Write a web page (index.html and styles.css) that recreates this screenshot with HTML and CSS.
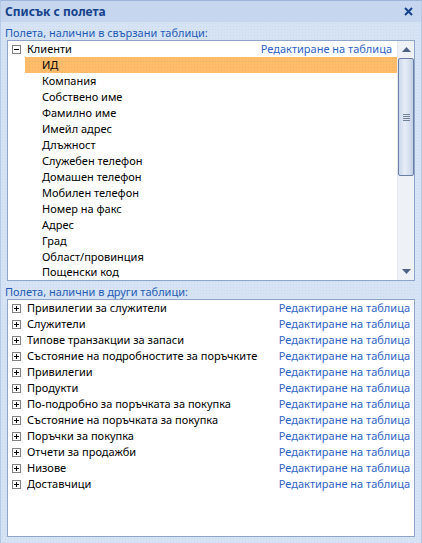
FILE: index.html
```html
<!DOCTYPE html>
<html lang="bg">
<head>
<meta charset="utf-8">
<title>Списък с полета</title>
<link rel="stylesheet" href="styles.css">
</head>
<body>
<div class="window">
  <div class="titlebar">
    <span class="title">Списък с полета</span>
    <svg class="close" width="9" height="9" viewBox="0 0 9 9"><path d="M1 1 L8 8 M8 1 L1 8" stroke="#15428b" stroke-width="2" fill="none"/></svg>
  </div>
  <div class="panel">
    <div class="section-label">Полета, налични в свързани таблици:</div>
    <div class="box box-top">
      <div class="list">
        <div class="row"><span class="exp minus"></span><span class="name">Клиенти</span><span class="edit">Редактиране на таблица</span></div>
        <div class="row child selected">ИД</div>
        <div class="row child">Компания</div>
        <div class="row child">Собствено име</div>
        <div class="row child">Фамилно име</div>
        <div class="row child">Имейл адрес</div>
        <div class="row child">Длъжност</div>
        <div class="row child">Служебен телефон</div>
        <div class="row child">Домашен телефон</div>
        <div class="row child">Мобилен телефон</div>
        <div class="row child">Номер на факс</div>
        <div class="row child">Адрес</div>
        <div class="row child">Град</div>
        <div class="row child">Област/провинция</div>
        <div class="row child last">Пощенски код</div>
      </div>
      <div class="scrollbar">
        <div class="arrow"><svg width="9" height="5" viewBox="0 0 9 5"><path d="M0 5 L4.5 0 L9 5 Z" fill="#4d6185"/></svg></div>
        <div class="thumb"><span class="grip"></span></div>
        <div class="track"></div>
        <div class="arrow"><svg width="9" height="5" viewBox="0 0 9 5"><path d="M0 0 L9 0 L4.5 5 Z" fill="#4d6185"/></svg></div>
      </div>
    </div>
    <div class="section-label">Полета, налични в други таблици:</div>
    <div class="box box-bottom">
      <div class="list">
        <div class="row"><span class="exp plus"></span><span class="name">Привилегии за служители</span><span class="edit">Редактиране на таблица</span></div>
        <div class="row"><span class="exp plus"></span><span class="name">Служители</span><span class="edit">Редактиране на таблица</span></div>
        <div class="row"><span class="exp plus"></span><span class="name">Типове транзакции за запаси</span><span class="edit">Редактиране на таблица</span></div>
        <div class="row"><span class="exp plus"></span><span class="name">Състояние на подробностите за поръчките</span><span class="edit">Редактиране на таблица</span></div>
        <div class="row"><span class="exp plus"></span><span class="name">Привилегии</span><span class="edit">Редактиране на таблица</span></div>
        <div class="row"><span class="exp plus"></span><span class="name">Продукти</span><span class="edit">Редактиране на таблица</span></div>
        <div class="row"><span class="exp plus"></span><span class="name">По-подробно за поръчката за покупка</span><span class="edit">Редактиране на таблица</span></div>
        <div class="row"><span class="exp plus"></span><span class="name">Състояние на поръчката за покупка</span><span class="edit">Редактиране на таблица</span></div>
        <div class="row"><span class="exp plus"></span><span class="name">Поръчки за покупка</span><span class="edit">Редактиране на таблица</span></div>
        <div class="row"><span class="exp plus"></span><span class="name">Отчети за продажби</span><span class="edit">Редактиране на таблица</span></div>
        <div class="row"><span class="exp plus"></span><span class="name">Низове</span><span class="edit">Редактиране на таблица</span></div>
        <div class="row"><span class="exp plus"></span><span class="name">Доставчици</span><span class="edit">Редактиране на таблица</span></div>
      </div>
    </div>
  </div>
</div>
</body>
</html>
```
FILE: styles.css
```css
html, body {
  margin: 0;
  padding: 0;
}
body {
  width: 422px;
  height: 543px;
  overflow: hidden;
  font-family: "Noto Sans", "DejaVu Sans", sans-serif;
  font-size: 11px;
  color: #000;
}
.window {
  width: 422px;
  height: 543px;
  box-sizing: border-box;
  border-left: 1px solid #b4c9e6;
  border-right: 1px solid #b4c9e6;
  border-top: 1px solid #9db5d8;
  background-color: #d6e3f4;
  background-image: radial-gradient(circle, #cbdaef 0.6px, transparent 0.8px);
  background-size: 3px 3px;
  display: flex;
  flex-direction: column;
}
.titlebar {
  height: 21px;
  flex: none;
  background: #c5d6ee;
  display: flex;
  align-items: center;
  justify-content: space-between;
  padding: 0 8px 0 4px;
}
.title {
  font-weight: bold;
  font-size: 12px;
  color: #15428b;
}
.close {
  display: block;
}
.panel {
  flex: 1;
  display: flex;
  flex-direction: column;
  padding: 0 6px 6px 6px;
}
.section-label {
  margin-top: 4px;
  height: 14px;
  line-height: 14px;
  margin-left: -2px;
  color: #1f5bb6;
  white-space: nowrap;
}
.box {
  background: #fff;
  border: 1px solid #8da5c9;
  display: flex;
  overflow: hidden;
  box-sizing: border-box;
}
.box-top {
  height: 241px;
}
.box-bottom {
  height: 238px;
}
.list {
  flex: 1;
  min-width: 0;
}
.row {
  height: 16px;
  line-height: 16px;
  display: flex;
  align-items: center;
  white-space: nowrap;
  padding-left: 4px;
  padding-right: 4px;
}
.box-top .row {
  padding-right: 5px;
}
.box-top .row.last {
  height: 14px;
  line-height: 14px;
  align-items: flex-start;
}
.row.child {
  padding-left: 34px;
}
.row.selected {
  margin-left: 17px;
  padding-left: 17px;
  background-color: #ffbd6c;
  background-image: radial-gradient(circle, #f7b264 0.6px, transparent 0.8px);
  background-size: 3px 3px;
}
.exp {
  width: 9px;
  height: 9px;
  box-sizing: border-box;
  border: 1px solid #808080;
  background: #fff;
  position: relative;
  flex: none;
  margin-right: 6px;
}
.exp::before {
  content: "";
  position: absolute;
  left: 1px;
  top: 3px;
  width: 5px;
  height: 1px;
  background: #000;
}
.exp.plus::after {
  content: "";
  position: absolute;
  left: 3px;
  top: 1px;
  width: 1px;
  height: 5px;
  background: #000;
}
.name {
  flex: 1;
  min-width: 0;
  overflow: hidden;
}
.edit {
  color: #2e63c7;
  flex: none;
  margin-left: 4px;
}
.scrollbar {
  width: 16px;
  flex: none;
  background: #eef1f5;
  border-left: 1px solid #e3e8ef;
  display: flex;
  flex-direction: column;
}
.arrow {
  height: 17px;
  flex: none;
  display: flex;
  align-items: center;
  justify-content: center;
}
.thumb {
  height: 118px;
  flex: none;
  box-sizing: border-box;
  border: 1px solid #6b7fa7;
  border-radius: 2px;
  background: linear-gradient(to right, #c9d6ea, #e6edf7 40%, #d7e1f0 70%, #c2cfe4);
  display: flex;
  align-items: center;
  justify-content: center;
}
.grip {
  width: 7px;
  height: 7px;
  background: repeating-linear-gradient(to bottom, #6f7f98 0, #6f7f98 1px, transparent 1px, transparent 2px);
}
.track {
  flex: 1;
}
```
